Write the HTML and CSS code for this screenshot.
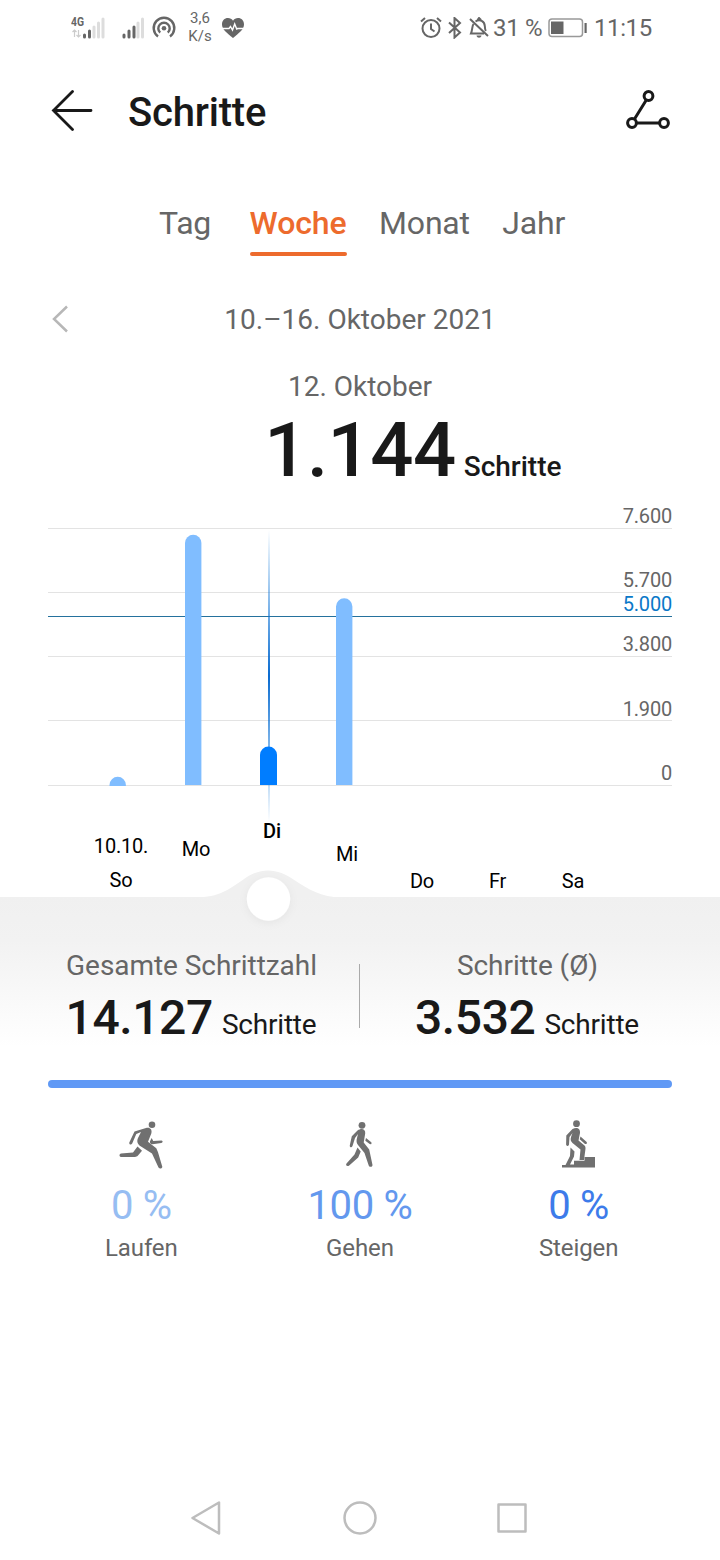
FILE: index.html
```html
<!DOCTYPE html>
<html lang="de">
<head>
<meta charset="utf-8">
<title>Schritte</title>
<link rel="stylesheet" href="styles.css">
</head>
<body>
<header class="status">
  <svg class="status-signal" width="36" height="28" viewBox="0 0 36 28">
    <text class="net" x="0" y="12" textLength="13" lengthAdjust="spacingAndGlyphs">4G</text>
    <path class="faint-line" d="M3.500 23v-7m-2 2 2-2 2 2M7.500 16v7m-2-2 2 2 2-2"/>
    <path class="sig-on" d="M13.500 23v-2M18.500 23v-6"/>
    <path class="sig-off" d="M23 23V13M27.500 23V9M32 23V5"/>
  </svg>
  <svg class="status-signal2" width="24" height="28" viewBox="0 0 24 28">
    <path class="sig-on" d="M2 23v-2M7 23v-6M12 23V13"/>
    <path class="sig-off" d="M16 23V9M20.500 23V5"/>
  </svg>
  <svg class="status-cast" width="24" height="24" viewBox="0 0 24 24">
    <path class="cast" d="M6 20.400A10.300 10.300 0 1 1 18 20.400M8.200 16.700A5.700 5.700 0 1 1 15.800 16.700"/>
    <circle class="solid" cx="12" cy="12.300" r="2.300"/>
  </svg>
  <div class="speed"><span>3,6</span><span>K/s</span></div>
  <svg class="status-heart" width="22" height="20" viewBox="0 0 22 20">
    <path class="solid" d="M11 20C5 15 0 11.500 0 6.500 0 2.500 2.500 0 6 0c2 0 4 1 5 2.700C12 1 14 0 16 0c3.500 0 6 2.500 6 6.500C22 11.500 17 15 11 20z"/>
    <path class="pulse" d="M0 10.500h7l1.500-2 2 3.500 2.200-6 2 5 1-.5H22"/>
  </svg>
  <svg class="status-alarm" width="22" height="22" viewBox="0 0 22 22">
    <circle class="line" cx="11" cy="11.500" r="8.500"/><path class="line" d="M11 6.500V12l3.500 2.500M1 4.500 5 1M21 4.500 17 1"/>
  </svg>
  <svg class="status-bt" width="14" height="22" viewBox="0 0 14 22">
    <path class="line" d="m1 5.500 11 10-5.500 5V1L12 6 1 16"/>
  </svg>
  <svg class="status-bell" width="20" height="22" viewBox="0 0 20 22">
    <path class="line" d="M1 2 19 19M4.500 7C3 9 3.500 13 2 16.500h13M6.500 4.500C11 1.500 15.500 4.500 15.800 9c.1 2 .4 4 1 5M8.500 3l1.500-2 2 2"/>
    <path class="solid" d="M7.500 18.500h5c-.5 3-4.500 3-5 0z"/>
  </svg>
  <span class="battery-text">31 %</span>
  <svg class="battery" width="40" height="20" viewBox="0 0 40 20">
    <rect class="battery-case" x="1" y="1" width="33.500" height="17.500" rx="3"/>
    <path class="solid" d="M3 3.500h12.500V16H3z"/><path class="solid" d="M36.500 5h2.200v10h-2.200z"/>
  </svg>
  <span class="clock">11:15</span>
</header>

<nav class="appbar">
  <svg class="back" width="42" height="42" viewBox="0 0 42 42"><path d="M21.500 2.500 2.500 21.500l19 19M2.500 21.500h37.500"/></svg>
  <h1 class="title">Schritte</h1>
  <svg class="route" width="48" height="44" viewBox="0 0 48 44">
    <path d="M10.500 31 22 12.500M13 35h22"/>
    <circle cx="24.500" cy="8" r="4.400"/><circle cx="8" cy="35" r="4.400"/><circle cx="40" cy="35" r="4.400"/>
  </svg>
</nav>

<nav class="tabs">
  <span class="tab tab-day">Tag</span><span class="tab active">Woche</span><span class="tab">Monat</span><span class="tab">Jahr</span>
</nav>

<section class="range">
  <svg width="18" height="30" viewBox="0 0 18 30"><path d="M16 1.500 3 14l13 12.500"/></svg>
  <span class="range-text">10.–16. Oktober 2021</span>
</section>

<section class="summary">
  <div class="day">12. Oktober</div>
  <div class="total"><b class="total-value">1.144</b><span class="total-unit">Schritte</span></div>
</section>

<section class="chart">
  <svg width="720" height="430" viewBox="0 500 720 430">
    <defs>
      <linearGradient id="needle" x1="0" y1="530" x2="0" y2="822" gradientUnits="userSpaceOnUse">
        <stop offset="0" stop-color="#0a78dc" stop-opacity="0"/>
        <stop offset=".5" stop-color="#0a6bd0"/>
        <stop offset="1" stop-color="#0a78dc" stop-opacity="0"/>
      </linearGradient>
      <filter id="soft" x="-30%" y="-30%" width="160%" height="160%"><feDropShadow dx="0" dy="2" stdDeviation="4" flood-opacity=".05"/></filter>
    </defs>
    <path class="grid" d="M48 528.500h624M48 592.500h624M48 656.500h624M48 720.500h624M48 785.500h624"/>
    <path class="goal" d="M48 616.500h624"/>
    <g class="axis">
      <text x="672" y="523">7.600</text><text x="672" y="587">5.700</text><text class="goal-text" x="672" y="611">5.000</text>
      <text x="672" y="651">3.800</text><text x="672" y="716">1.900</text><text x="672" y="780">0</text>
    </g>
    <path class="bar" d="M109.500 786v-1a8.200 8.200 0 0 1 16.400 0v1z"/>
    <path class="bar" d="M185 785V543a8.200 8.200 0 0 1 16.400 0v242z"/>
    <path class="bar" d="M336 785V606.500a8.200 8.200 0 0 1 16.400 0V785z"/>
    <rect x="268" y="530" width="2" height="292" fill="url(#needle)"/>
    <path class="bar-selected" d="M260 785v-30a8.500 8.500 0 0 1 17 0v30z"/>
    <path class="wave" d="M196 897.500c23 0 34-9 46-17 17-13.500 35-13.500 53 0 12 8 27 17 46 17z"/>
    <g class="days">
      <text x="121" y="853">10.10.</text><text x="121" y="887">So</text><text x="196" y="856">Mo</text>
      <text class="day-selected" x="272" y="838">Di</text><text x="347" y="861">Mi</text>
      <text x="422" y="888">Do</text><text x="497.500" y="888">Fr</text><text x="573" y="888">Sa</text>
    </g>
    <circle cx="268.500" cy="899" r="21.700" fill="#fff" filter="url(#soft)"/>
  </svg>
</section>

<section class="stats">
  <div class="stat">
    <div class="stat-label">Gesamte Schrittzahl</div>
    <div class="stat-value"><b>14.127</b><span>Schritte</span></div>
  </div>
  <div class="stat">
    <div class="stat-label">Schritte (Ø)</div>
    <div class="stat-value"><b>3.532</b><span>Schritte</span></div>
  </div>
</section>

<div class="share-bar"></div>

<section class="modes">
  <div class="mode run">
    <svg width="70" height="65" viewBox="0 0 70 65">
      <circle cx="42" cy="14.700" r="3.300"/>
      <path d="M24.500 21.500 36 18c4-1 6.500 1.500 5.300 5.500l-3.300 8.300 8.300 6.500 1.700 4 4.300 14.500c0 2-2.800 2.500-3.800.7L42 43.500l-11-7c-3.500-2-4.500-5-3-8.500l3-6-4.700 2-4.100 9.500c-1 2-3.400 1-2.900-1z"/>
      <path d="m41.700 28 1.500 3 8.300-.5c1.700.5 1.400 2.300-.2 2.500L42.500 34.200c-2 0-3-1.500-2.500-3zM27.500 36.500l4.500 4.200-4 4.800c-1 1-2 1.400-3 1.400H11c-2.200-.5-1.700-3 0-3.400l12-1z"/>
    </svg>
    <div class="percent">0 %</div><div class="mode-label">Laufen</div>
  </div>
  <div class="mode walk">
    <svg width="60" height="65" viewBox="0 0 60 65">
      <circle cx="32" cy="15.300" r="3.400"/>
      <path d="M27.500 20.500c4-3 8.200-1.500 7.700 3l-1.500 9 5.500 7 3.300 15.500c0 2.200-2.800 2.500-3.700.7L34.500 43 28 35c-1.500-2-1.800-4-1-7l1-4-3 4-2.500 8c-.8 2-3 1.500-2.700-.8l2-9z"/>
      <path d="m36 28 5.300 4.200c.7 1.500-.2 2.400-1.600 1.900l-4.400-3.300zM27.500 37.500l3.200 4-2.500 6-9 8c-1.900 1.500-4-.2-2.700-2l8-9z"/>
    </svg>
    <div class="percent">100 %</div><div class="mode-label">Gehen</div>
  </div>
  <div class="mode climb">
    <svg width="65" height="65" viewBox="0 0 65 65">
      <circle cx="31.500" cy="13.700" r="3.400"/>
      <path d="M27.500 19c4.300-2.500 8-.5 7.500 4l-1.500 7.500 6 5c1 1 1.200 2 .9 4L39 50h-4.500l1-10.500-8-6.500c-2-2-2.300-3.500-1.300-6.500l1.300-3.500-3 4-.5 7.500c-.5 2.200-2.800 1.700-2.900 0l.2-9z"/>
      <path d="m35.500 26.500 6.200 5.500c.7 1.500-.4 2.400-1.700 1.900l-5.300-4.700zM25.500 37.500l4 4-.5 5-4 8H29v-3.700h10.500V47H50v10.500H17V55h3.500l4.500-9z"/>
    </svg>
    <div class="percent">0 %</div><div class="mode-label">Steigen</div>
  </div>
</section>

<footer class="sysnav">
  <svg width="340" height="36" viewBox="190 1500 340 36">
    <path d="m192.500 1518 26.500-15.500v31z"/><circle cx="360" cy="1518" r="15.500"/><rect x="498.500" y="1504.500" width="27" height="27"/>
  </svg>
</footer>
</body>
</html>
```
FILE: styles.css
```css
* { box-sizing: border-box; }
body { margin: 0; width: 720px; height: 1560px; display: flex; flex-direction: column; background: #fff; color: #191919; font-family: Roboto, "Liberation Sans", sans-serif; overflow: hidden; }
svg { display: block; flex: none; }

.status { display: flex; align-items: center; height: 56px; padding-left: 71px; color: #666; white-space: nowrap; }
.status-signal2 { margin-left: 15px; }
.status-cast { margin-left: 6px; }
.speed { display: flex; flex-direction: column; align-items: center; width: 26px; margin-left: 11px; font-size: 15px; line-height: 18px; margin-bottom: 2px; }
.status-heart { margin-left: 9px; }
.status-alarm { margin-left: 176px; }
.status-bt { margin-left: 6px; }
.status-bell { margin-left: 7px; }
.battery-text { width: 54px; margin-left: 4px; font-size: 24px; letter-spacing: -0.3px; }
.battery { margin-left: 1px; }
.clock { margin-left: 6px; font-size: 24px; letter-spacing: -0.4px; }
.net { font: 700 12px Roboto, sans-serif; fill: #666; }
.line { fill: none; stroke: #666; stroke-width: 2; }
.faint-line { fill: none; stroke: #ccc; stroke-width: 1.2; }
.sig-on { stroke: #666; stroke-width: 3; stroke-linecap: round; }
.sig-off { stroke: #ddd; stroke-width: 3; stroke-linecap: round; }
.cast { fill: none; stroke: #666; stroke-width: 2.400; }
.solid { fill: #666; }
.pulse { fill: none; stroke: #fff; stroke-width: 1.400; }
.battery-case { fill: none; stroke: #999; stroke-width: 1.500; }

.appbar { display: flex; align-items: center; height: 112px; padding: 0 48px 4px 51px; }
.back { fill: none; stroke: #191919; stroke-width: 2.800; stroke-linecap: round; }
.title { flex: 1; margin: 5px 0 0 35px; font-size: 40px; line-height: 48px; font-weight: 500; letter-spacing: -0.2px; }
.route { fill: none; stroke: #191919; stroke-width: 3; }

.tabs { display: flex; gap: 32.5px; height: 120px; padding: 35px 0 0 159px; font-size: 32px; line-height: 40px; letter-spacing: -0.2px; color: #666; }
.tab { height: 54px; }
.tab-day { margin-right: 6px; }
.active { color: #ed6b2d; font-weight: 500; letter-spacing: -0.1px; display: flex; flex-direction: column; justify-content: space-between; }
.active::after { content: ""; height: 4px; margin-bottom: 1px; border-radius: 2px; background: #ed6b2d; }

.range { display: grid; grid-template-columns: 18px 1fr 18px; align-items: center; height: 64px; padding: 0 51px 1px; }
.range svg { fill: none; stroke: #b7b7b7; stroke-width: 2.500; }
.range-text { text-align: center; font-size: 28px; color: #666; }

.summary { height: 148px; padding-top: 19px; text-align: center; }
.day { font-size: 28px; line-height: 32px; color: #666; }
.total { display: grid; grid-template-columns: 1fr auto 1fr; align-items: baseline; column-gap: 8px; line-height: 94px; }
.total-value { grid-column: 2; font-size: 76px; font-weight: 500; letter-spacing: -0.5px; }
.total-unit { font-size: 28px; font-weight: 500; text-align: left; }

.chart { position: relative; z-index: 1; height: 397px; }
.grid { stroke: #e3e3e3; }
.goal { stroke: #24719d; }
.axis { font-size: 20px; text-anchor: end; fill: #666; letter-spacing: -0.2px; }
.goal-text { fill: #0a78c8; }
.bar { fill: #80bdff; }
.bar-selected { fill: #007dff; }
.wave { fill: #f0f0f0; }
.days { font-size: 20px; text-anchor: middle; fill: #000; letter-spacing: -0.2px; }
.day-selected { font-weight: 500; }

.stats { display: grid; grid-template-columns: 1fr 1fr; height: 183px; padding: 51px 25px 0 23px; text-align: center; background: linear-gradient(#f0f0f0 0, #f2f2f2 43px, #fff 150px); }
.stat { height: 98px; }
.stat + .stat { background: linear-gradient(#aaa, #aaa) 0 16px / 1px 64px no-repeat; }
.stat-label { height: 36px; padding-left: 1px; font-size: 28px; line-height: 36px; color: #666; letter-spacing: -0.05px; }
.stat-value { display: flex; justify-content: center; align-items: baseline; gap: 9px; line-height: 68px; }
.stat-value b { font-size: 48px; font-weight: 500; letter-spacing: -0.4px; }
.stat-value span { font-size: 28px; letter-spacing: -0.2px; }

.share-bar { height: 8px; margin: 0 48px; border-radius: 4px; background: #6099f5; }

.modes { display: grid; grid-template-columns: repeat(3, 1fr); height: 388px; padding: 22px 32px 0; }
.mode { display: flex; flex-direction: column; align-items: center; }
.mode svg { fill: #707070; }
.percent { margin-top: 9px; font-size: 40px; line-height: 44px; letter-spacing: -0.3px; }
.mode-label { margin-top: 6px; font-size: 24px; line-height: 28px; color: #666; letter-spacing: -0.1px; }
.run svg { margin-left: 7px; }
.walk svg { margin-left: 1px; }
.climb svg { margin-right: 2px; }
.run .percent { color: #96bdf2; }
.walk .percent { color: #6398ee; }
.climb .percent { color: #3d7bea; }

.sysnav { display: flex; justify-content: center; margin-top: 24px; }
.sysnav svg { fill: none; stroke: #bdbdbd; stroke-width: 2.500; stroke-linejoin: round; }
```
